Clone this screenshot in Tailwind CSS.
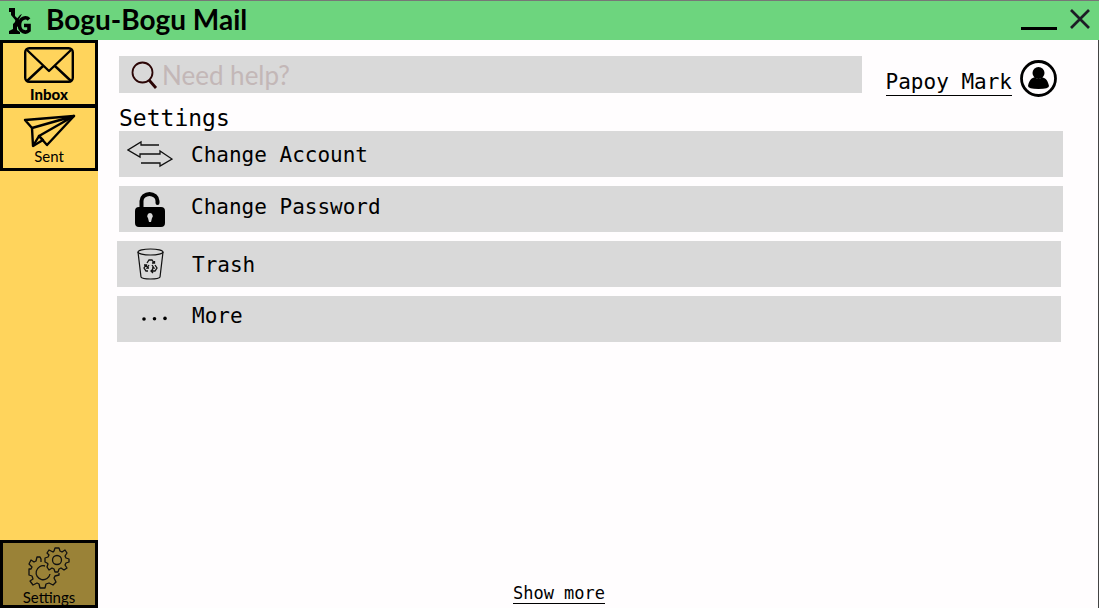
<!DOCTYPE html>
<html lang="en">
<head>
<meta charset="utf-8">
<meta name="viewport" content="width=device-width, initial-scale=1">
<title>Bogu-Bogu Mail</title>
<script src="https://cdn.jsdelivr.net/npm/@tailwindcss/browser@4"></script>
</head>
<body class="flex min-h-screen flex-col bg-[#fffdfe] font-['Lato',sans-serif] text-black">
<header class="flex h-10 items-center justify-between border-t border-[#777777] bg-[#6dd57e] pr-2 pb-[3px] pl-2">
  <div class="flex items-center gap-[14px]">
    <svg class="mt-1 h-7 w-6" viewBox="0 0 24 28" aria-hidden="true">
      <path d="M1 1H7V9L11 13V16L9 18V23L12 25V27H1V24L5 22V17L8 14L3 8V5H1Z"/>
      <path d="M7 14L12 8L14 7L10 14L12 18L9 20Z"/>
      <path d="M21 12.500C18 9 11.500 11 11.500 18C11.500 25 18 26.500 21 23.500V18.500H16" fill="none" stroke="#000" stroke-width="3.600"/>
    </svg>
    <h1 class="text-[28px] leading-9 font-bold">Bogu-Bogu Mail</h1>
  </div>
  <div class="flex items-center gap-3">
    <button type="button" aria-label="Minimize" class="flex h-[22px] w-9 items-end"><span class="block h-[3px] w-full bg-black"></span></button>
    <button type="button" aria-label="Close"><svg class="size-[22px]" viewBox="0 0 22 22"><path d="M2 2L20 20M20 2L2 20" stroke="#1d1d26" stroke-width="2.7"/></svg></button>
  </div>
</header>
<div class="flex flex-1">
  <nav class="flex w-[98px] shrink-0 flex-col bg-[#ffd45c]" aria-label="Mailboxes">
    <button type="button" class="flex h-[67px] flex-col items-center border-3 border-black pt-1 text-[15px] leading-4 font-black">
      <svg class="h-9 w-[50px] shrink-0" viewBox="0 0 50 36" fill="none" stroke="#000" stroke-width="2.4" stroke-linejoin="round"><rect x="1.2" y="1.2" width="47.6" height="33.6" rx="4"/><path d="M3 3L25 24L47 3M3 34L19 19M47 34L31 19"/></svg>
      <span class="mt-[3px]">Inbox</span>
    </button>
    <button type="button" class="-mt-[2px] flex h-[66px] flex-col items-center border-3 border-black pt-[6px] text-[15px] leading-4">
      <svg class="h-[34px] w-[53px] shrink-0" viewBox="0 0 53 34" fill="none" stroke="#000" stroke-width="2.4" stroke-linejoin="round"><path d="M51 2L2 6L9 14L10 32L16 22L24 31L51 2Z"/><path d="M9 14L51 2L16 22L20 26L10 32"/></svg>
      <span>Sent</span>
    </button>
    <button type="button" aria-current="page" class="mt-auto flex h-[68px] flex-col items-center border-3 border-black bg-[#9a8237] pt-1 text-[15px] leading-4">
      <svg class="h-[42px] w-[42px] shrink-0" viewBox="0 0 42 42" fill="none" stroke="#111" stroke-width="1.3" stroke-linejoin="round">
        <path d="M27 1H31L32 4L34 5L37 3L39 6L37 9L38 11L41 12V15L38 16L37 18L39 21L36 23L33 21L31 22L30 25H27L26 22L24 21L21 23L19 20L20 17L19 16L17 15V11L20 10L21 8L19 6L21 3L25 5L26 4Z"/>
        <circle cx="29" cy="13" r="4.5"/>
        <path d="M13 15V12L12 10H9L8 14L6 15L3 13L1 17L4 20L3 22H1V28L4 29L5 32L2 34L5 38L9 36L11 37L12 41H17L18 37L21 36L25 38L28 35L26 31L27 29L31 28V26"/>
        <path d="M17 19A7 7 0 1 0 22 27"/>
      </svg>
      <span>Settings</span>
    </button>
  </nav>
  <main class="flex min-w-0 flex-1 flex-col border-r border-[#444444] pt-4 pr-[35px] pl-[21px] font-['DejaVu_Sans_Mono',monospace]">
    <div class="mr-[6px] flex items-start">
      <label class="flex h-[37px] min-w-0 flex-1 items-center bg-[#d9d9d9] pl-3 font-['Lato',sans-serif]">
        <svg class="size-7 shrink-0" viewBox="0 0 28 28" fill="none" stroke="#2b0505"><circle cx="11.500" cy="11.500" r="10" stroke-width="1.800"/><path d="M18 19L25 27" stroke-width="2.800"/></svg>
        <input type="search" aria-label="Search help" placeholder="Need help?" class="ml-[3px] h-full min-w-0 flex-1 bg-transparent text-[26px] outline-none placeholder:text-[#c3b7b7]">
      </label>
      <a href="#" class="mt-1 ml-6 flex items-start gap-2 text-[21px] leading-7">
        <span class="mt-[9px] border-b border-black leading-[26px]">Papoy Mark</span>
        <svg class="size-[37px]" viewBox="0 0 37 37"><circle cx="18.500" cy="18.500" r="17" fill="none" stroke="#000" stroke-width="2.800"/><circle cx="18.500" cy="13" r="6"/><path d="M8 26C9 20 12 17.500 15 17.500Q18.500 20 22 17.500C26 18 28 21 29 26Q29 29 18.500 29T8 26Z"/></svg>
      </a>
    </div>
    <h2 class="mt-2 text-[23px] leading-[26px]">Settings</h2>
    <div class="flex flex-col gap-[9px] text-[21px]">
      <button type="button" class="flex h-[46px] items-center bg-[#d9d9d9] pt-[3px] pl-2 text-left">
        <svg class="mr-[18px] mb-1 h-7 w-[46px]" viewBox="0 0 46 28" fill="none" stroke="#111" stroke-width="1.300"><path d="M32 5H14V2L1 10L13 17V14H33V11L45 19L33 26V23H14"/></svg>Change Account
      </button>
      <button type="button" class="flex h-[46px] items-center bg-[#d9d9d9] pl-4 text-left">
        <svg class="mr-[26px] h-[35px] w-[30px]" viewBox="0 0 30 35"><path d="M6.500 17V9A8 7 0 0 1 22.500 9V11" fill="none" stroke="#000" stroke-width="4" stroke-linecap="round"/><path fill-rule="evenodd" d="M4 15H26Q30 15 30 19V31Q30 35 26 35H4Q0 35 0 31V19Q0 15 4 15ZM15 21A3 3 0 0 0 13 26L14 30H16L17 26A3 3 0 0 0 15 21Z"/></svg><span class="pb-[3px]">Change Password</span>
      </button>
      <button type="button" class="mr-[2px] -ml-[2px] flex h-[46px] items-center bg-[#d9d9d9] pl-5 text-left">
        <svg class="mr-7 h-8 w-[27px]" viewBox="0 0 27 32" fill="none" stroke="#111" stroke-width="1.200"><ellipse cx="13.500" cy="4" rx="12.500" ry="3"/><path d="M1 4L4 29Q5 31 13.500 31T23 29L26 4"/><path d="M10 15L12 12H15L17 15M15 15H17.500V13M18 17L20 20L18 23H14M16 21L14 23L16 25M11 23H9L7 20L9 17M7 17H9.500V19M12 17L10 20H12M15 17L17 20H15" stroke-width="1.300"/></svg><span class="pt-1">Trash</span>
      </button>
      <button type="button" class="mr-[2px] -ml-[2px] flex h-[46px] items-center bg-[#d9d9d9] pl-6 text-left">
        <svg class="mr-6 h-2 w-[27px]" viewBox="0 0 27 8"><circle cx="3" cy="4" r="1.800"/><circle cx="13.500" cy="3.700" r="1.800"/><circle cx="24" cy="3.400" r="1.800"/></svg><span class="pb-1">More</span>
      </button>
    </div>
    <a href="#" class="mt-auto mr-16 mb-1 self-center border-b border-black text-[17px] leading-5">Show more</a>
  </main>
</div>
</body>
</html>
